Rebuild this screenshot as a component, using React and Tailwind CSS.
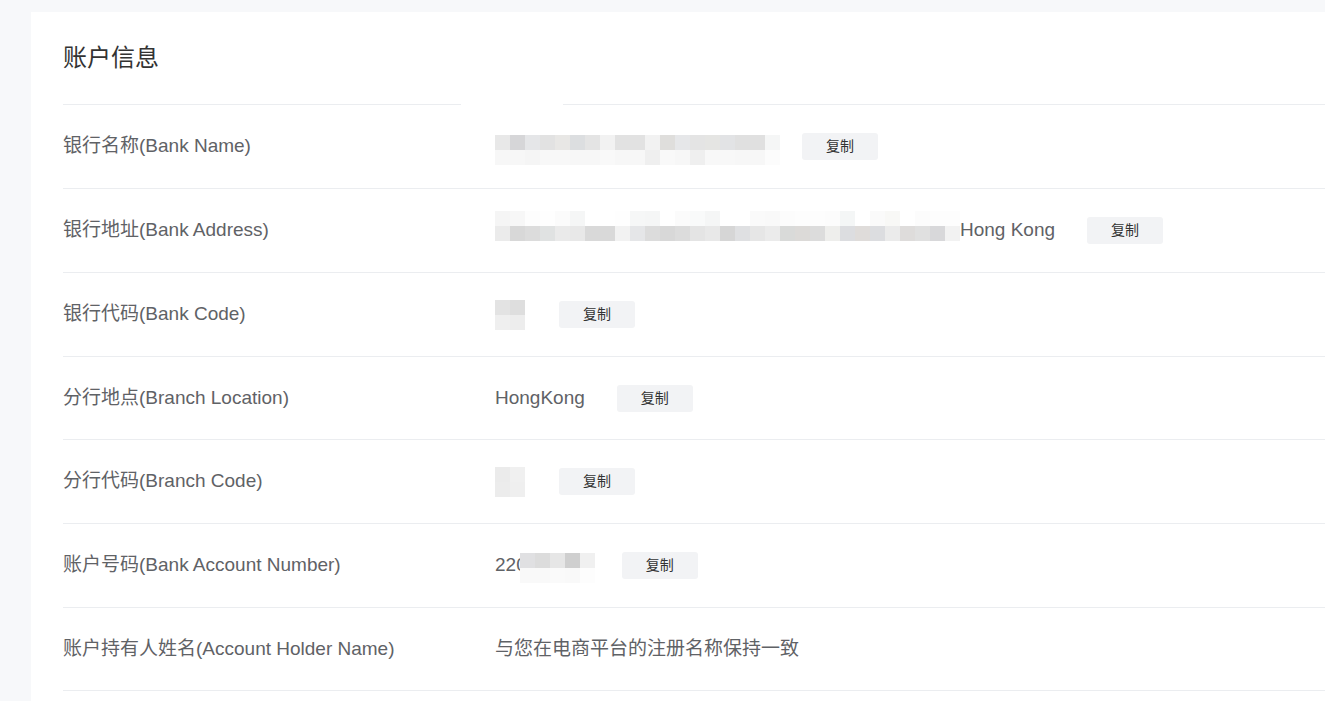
import React from "react";

const FONT = { fontFamily: '"Liberation Sans", Arial, "Noto Sans CJK SC", sans-serif' };

function Blur({ rows, className = "" }) {
  return (
    <div className={"flex flex-col shrink-0 " + className}>
      {rows.map((r, i) => (
        <div key={i} className="flex">
          {r.map((c, j) => (
            <div key={j} className="w-[15px] h-[15px]" style={{ background: c }} />
          ))}
        </div>
      ))}
    </div>
  );
}

function CopyBtn({ className = "" }) {
  return (
    <button className={"shrink-0 w-[76px] h-[27px] rounded-[3px] bg-[#f2f3f5] text-[14px] text-[#333] flex items-center justify-center " + className}>
      复制
    </button>
  );
}

const bankNameRows = [
  ["#e8e8e8", "#d6d6d8", "#e5e6e8", "#e2e2e2", "#e8e7e5", "#dcdee0", "#e4e4e4", "#f2f2f2", "#e2e2e2", "#e2e2e2", "#f2f2f2", "#dfdedc", "#e6e7e9", "#e4e4e4", "#e5e5e3", "#e2e3e5", "#e0e0e0", "#e0e0e0", "#f5f6f6"],
  ["#f7f7f7", "#f7f7f7", "#f5f5f5", "#f8f8f8", "#f8f8f8", "#f7f7f7", "#f7f7f7", "#f9f9f9", "#f7f7f7", "#f7f7f7", "#efefef", "#f9f9f9", "#f7f7f7", "#efefef", "#f8f8f8", "#f8f8f8", "#f7f7f7", "#f7f7f7", "#fcfcfc"],
];

const addrRows = [
  ["#f5f5f5", "#f7f7f7", "#fdfdfd", "#fefefe", "#fbfbfb", "#f5f6f6", "#ffffff", "#ffffff", "#fefefe", "#f6f7f7", "#f5f6f6", "#ffffff", "#fbfbfb", "#f9fafa", "#f5f6f6", "#ffffff", "#ffffff", "#fafafa", "#f9f9f9", "#fcfcfc", "#fdfdfd", "#fdfdfd", "#fcfcfc", "#f4f6f6", "#ffffff", "#fafafa", "#f8f8f6", "#ffffff", "#fcfcfc", "#fdfdfd", "#fdfdfd"],
  ["#ebebeb", "#d8d8d8", "#dcdcdc", "#e0e2e2", "#eaeaea", "#e8e8e8", "#d9d9d9", "#d9d9d9", "#f2f2f2", "#e5e6e8", "#dcdcdc", "#d8d8d8", "#dcdcdc", "#e4e4e4", "#e8e8e8", "#d6d6d6", "#dfe0e2", "#e6e6e6", "#ebebeb", "#d9dad9", "#dcdad8", "#dcdcdc", "#eeeeec", "#dcdde0", "#dfdcda", "#dcdde0", "#ebebeb", "#dedcdb", "#e0e0e0", "#d8d8da", "#f2f2f2"],
];

const codeRows = [
  ["#e3e3e3", "#dedede"],
  ["#efefef", "#ededed"],
];

const branchRows = [
  ["#ebebeb", "#f0f0f0"],
  ["#ececec", "#efefef"],
];

const acctRows = [
  ["#e0e0e2", "#dcdcdc", "#e6e6e6", "#cfcfcf", "#f0f0f0"],
  ["#f9f9f9", "#f9f9f9", "#fafafa", "#f9f9f9", "#fdfdfd"],
];

function Row({ label, h, children }) {
  return (
    <div className={"flex items-center border-b border-[#ebedf0] " + h}>
      <div className="w-[432px] shrink-0 text-[19px] text-[#5f6266]">{label}</div>
      <div className="flex items-center text-[19px] text-[#5f6266]">{children}</div>
    </div>
  );
}

export default function App() {
  return (
    <div className="w-full h-[701px] overflow-hidden bg-[#f7f8fa] pt-[12px] pl-[31px]" style={FONT}>
      <div className="bg-white h-[720px] pl-[32px]">
        <div className="h-[92px] flex items-center">
          <h1 className="text-[24px] text-[#333] leading-none">账户信息</h1>
        </div>
        <div className="relative border-t border-[#ebedf0]">
          <div className="absolute left-[398px] top-[-2px] w-[102px] h-[4px] bg-white" />
          <Row label="银行名称(Bank Name)" h="h-[84px]">
            <Blur rows={bankNameRows} className="mt-[6px]" />
            <CopyBtn className="ml-[22px]" />
          </Row>
          <Row label="银行地址(Bank Address)" h="h-[84px]">
            <Blur rows={addrRows} className="mb-[10px]" />
            <span>Hong Kong</span>
            <CopyBtn className="ml-[32px]" />
          </Row>
          <Row label="银行代码(Bank Code)" h="h-[84px]">
            <Blur rows={codeRows} />
            <CopyBtn className="ml-[34px]" />
          </Row>
          <Row label="分行地点(Branch Location)" h="h-[83px]">
            <span>HongKong</span>
            <CopyBtn className="ml-[32px]" />
          </Row>
          <Row label="分行代码(Branch Code)" h="h-[84px]">
            <Blur rows={branchRows} />
            <CopyBtn className="ml-[34px]" />
          </Row>
          <Row label="账户号码(Bank Account Number)" h="h-[84px]">
            <span className="whitespace-nowrap">220</span>
            <Blur rows={acctRows} className="relative mt-[4px] ml-[-7px]" />
            <CopyBtn className="ml-[27px]" />
          </Row>
          <Row label="账户持有人姓名(Account Holder Name)" h="h-[83px]">
            <span>与您在电商平台的注册名称保持一致</span>
          </Row>
        </div>
      </div>
    </div>
  );
}
